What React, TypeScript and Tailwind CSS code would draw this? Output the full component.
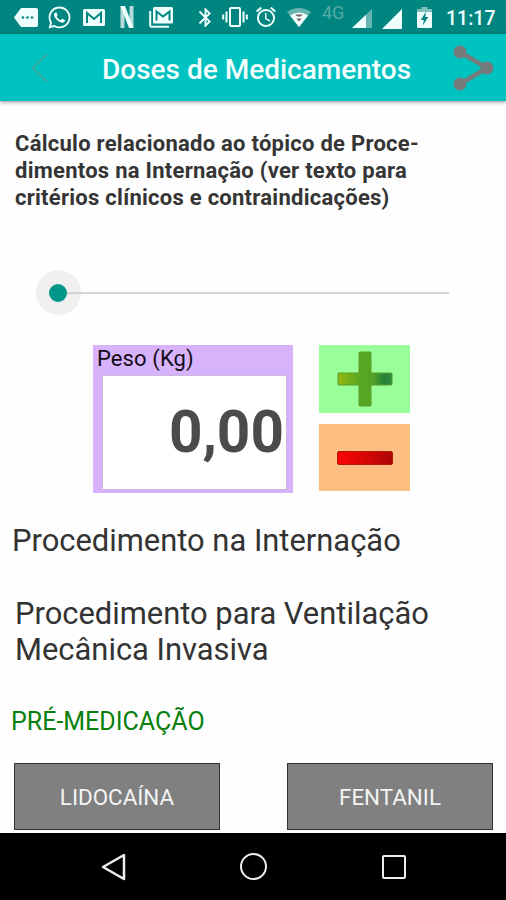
import { FaWhatsapp } from 'react-icons/fa'
import { MdBluetooth, MdAlarm } from 'react-icons/md'

const doses = ['LIDOCAÍNA', 'FENTANIL']

function StatusBar() {
    return (
        <div className="flex h-[34px] items-center bg-[#008580] text-[#effffe]">
            {/* Notifications */}
            <svg className="ml-[14px] w-6 h-[19px] shrink-0" viewBox="0 0 24 19" fill="currentColor">
                <path d="M7 0h15a2 2 0 0 1 2 2v15a2 2 0 0 1-2 2H7L0 9.500z" />
                <g fill="#008580">
                    <circle cx="9" cy="9.500" r="1.300" />
                    <circle cx="13.500" cy="9.500" r="1.300" />
                    <circle cx="18" cy="9.500" r="1.300" />
                </g>
            </svg>
            <FaWhatsapp className="ml-[9px] w-[25px] h-[25px] shrink-0" />
            <svg className="ml-[11px] w-[22px] h-[17px] shrink-0" viewBox="0 0 22 17">
                <rect width="22" height="17" rx="1.500" fill="currentColor" />
                <path d="M4 14V4l7 6 7-6v10" fill="none" stroke="#008580" strokeWidth="2" />
            </svg>
            <svg className="ml-[15px] w-[14px] h-[22px] shrink-0" viewBox="0 0 14 22">
                <path d="M2.500 22V0M11.500 22V0" stroke="#b5dcda" strokeWidth="4" />
                <path d="M0.500 0h4.500l8.500 22H9z" fill="currentColor" />
            </svg>
            <svg className="ml-[15px] w-6 h-[21px] shrink-0" viewBox="0 0 24 21">
                <path d="M1.200 4v14.500q0 1.300 1.300 1.300H20" fill="none" stroke="currentColor" strokeWidth="2" />
                <rect x="4" width="20" height="16.500" rx="1.500" fill="currentColor" />
                <path d="M7.500 13.500V4.500l6.500 5 6.500-5v9" fill="none" stroke="#008580" strokeWidth="2" />
            </svg>

            {/* System */}
            <MdBluetooth className="ml-[21px] w-[23px] h-[23px] shrink-0" />
            <svg className="ml-[5px] w-[26px] h-[20px] shrink-0" viewBox="0 0 26 20" fill="none" stroke="currentColor" strokeWidth="2">
                <rect x="8" y="1" width="10" height="18" rx="1" />
                <path d="M4.500 4.500v11M21.500 4.500v11M1.200 7.500v5M24.800 7.500v5" />
            </svg>
            <MdAlarm className="ml-[6px] w-[24px] h-[24px] shrink-0" />
            <svg className="ml-[9px] w-6 h-[19px] shrink-0" viewBox="0 0 24 19">
                <path d="M0 4Q12-4 24 4L12 19z" fill="#65b4b0" />
                <path d="M3 7.500Q12 1.500 21 7.500L12 19z" fill="currentColor" />
                <path d="M8 6.500h8l-2.300 2h-3.400zM9.500 10.500h5L12 13.500z" fill="#785f68" />
            </svg>
            <span className="ml-[11px] w-[24px] h-[28px] text-[18px] leading-[20px] text-[#55aaa6]">4G</span>
            <svg className="ml-[6px] mt-[3px] w-5 h-[19px] shrink-0" viewBox="0 0 20 19">
                <path d="M20 0v19H0z" fill="#65b4b0" />
                <path d="M14 5.700V19H0z" fill="currentColor" />
            </svg>
            <svg className="ml-[10px] mt-[3px] w-5 h-[20px] shrink-0" viewBox="0 0 20 20">
                <path d="M20 0v20H0z" fill="currentColor" />
            </svg>
            <svg className="ml-[15px] mt-px w-[15px] h-[21px] shrink-0" viewBox="0 0 15 21">
                <path d="M4.500 0h6v2H15v5H0V2h4.500z" fill="#80c0bd" />
                <path d="M0 5h15v14.500a1.500 1.500 0 0 1-1.500 1.500h-12A1.500 1.500 0 0 1 0 19.500z" fill="currentColor" />
                <path d="M9 4.500 3.800 13h3l-1 5.500L11.200 10h-3z" fill="#008580" />
            </svg>
            <span className="ml-[14px] mt-[4px] font-medium text-[19.500px] leading-[24px]">11:17</span>
        </div>
    )
}

function TopBar() {
    return (
        <header className="relative flex h-[67px] items-center bg-[#00c2c1] shadow-[0_1px_4px_rgba(0,0,0,0.450)]">
            <svg className="ml-[31px] w-[17px] h-[30px] shrink-0" viewBox="0 0 17 30" fill="none" stroke="#3daaa7" strokeWidth="1.800">
                <path d="M16 1 1.500 15 16 29" />
            </svg>
            <h1 className="mt-[4px] ml-[54px] w-[351px] whitespace-nowrap text-[28px] font-medium text-[#f2fffe]">Doses de Medicamentos</h1>
            <svg className="mt-px w-[41px] h-[46px] shrink-0" viewBox="0 0 41 46" fill="#777a7b">
                <path d="M7 7 34 23 7 39" fill="none" stroke="#777a7b" strokeWidth="4.500" />
                <circle cx="7" cy="7" r="6.500" />
                <circle cx="34" cy="23" r="6.500" />
                <circle cx="7" cy="39" r="6.500" />
            </svg>
        </header>
    )
}

function WeightSlider() {
    return (
        <div className="mt-[59px] ml-9 flex h-[45px] w-[413px] items-center">
            <div className="flex size-[45px] items-center justify-center rounded-full bg-[#f0f0f0] pr-px">
                <div className="size-[18px] rounded-full bg-[#009788]" />
            </div>
            <div className="-ml-[14px] h-[2px] flex-1 bg-[#d4d4d4]" />
        </div>
    )
}

function WeightInput() {
    return (
        <div className="mt-[30px] ml-[93px] flex gap-[26px]">
            <div className="h-[148px] w-[200px] bg-[#d6b3fb] pt-px">
                <div className="ml-[4px] h-[29px] text-[22px] leading-[26px] tracking-[0.1px] text-[#120c18]">Peso (Kg)</div>
                <div className="ml-[9px] flex h-[115px] w-[185px] items-center justify-end border border-[#c9b9d6] bg-white pr-[2px] text-[58.500px] font-bold text-[#4b4b4b]">
                    0,00
                </div>
            </div>
            <div className="flex flex-col gap-[11px]">
                <button className="flex h-[68px] w-[91px] items-center justify-center bg-[#99ff98]">
                    <svg width="56" height="56" viewBox="0 0 56 56">
                        <defs>
                            <linearGradient id="plus">
                                <stop offset="0" stopColor="#94b910" />
                                <stop offset="0.400" stopColor="#5aa722" />
                                <stop offset="0.650" stopColor="#55a326" />
                                <stop offset="0.850" stopColor="#26813a" />
                                <stop offset="1" stopColor="#2f8d3f" />
                            </linearGradient>
                        </defs>
                        <path
                            d="M23 1h10q1 0 1 1v20h20q1 0 1 1v10q0 1-1 1H34v20q0 1-1 1H23q-1 0-1-1V34H2q-1 0-1-1V23q0-1 1-1h20V2q0-1 1-1z"
                            fill="url(#plus)"
                            stroke="#5b9c28"
                            strokeWidth="1"
                        />
                    </svg>
                </button>
                <button className="flex h-[67px] w-[91px] items-center justify-center bg-[#fdbf81]">
                    <div className="h-[14px] w-[56px] rounded-[2px] border border-[#b51408] bg-linear-to-r from-[#fb0505] via-[#d90505] to-[#ad0606]" />
                </button>
            </div>
        </div>
    )
}

function NavBar() {
    return (
        <nav className="h-[67px] bg-black">
            <div className="flex h-full items-center">
                <svg className="ml-[101px] w-[25px] h-[28px]" viewBox="0 0 25 28" fill="none" stroke="#eee" strokeWidth="2.500" strokeLinejoin="round">
                    <path d="M23 2v24L2 14z" />
                </svg>
                <div className="ml-[114px] size-[27px] rounded-full border-[2.500px] border-[#eee]" />
                <div className="ml-[115px] size-[24px] rounded-[2px] border-[2.500px] border-[#eee]" />
            </div>
        </nav>
    )
}

export default function App() {
    return (
        <div className="flex h-[900px] w-[506px] flex-col overflow-hidden bg-[#fefefe] font-['Roboto',sans-serif]">
            <StatusBar />
            <TopBar />
            <main className="h-[732px]">
                <p className="mt-[29px] ml-[15px] whitespace-nowrap text-[22px] leading-[27px] tracking-[0.26px] font-bold text-[#353535]">
                    Cálculo relacionado ao tópico de Proce-
                    <br />
                    dimentos na Internação (ver texto para
                    <br />
                    critérios clínicos e contraindicações)
                </p>
                <WeightSlider />
                <WeightInput />
                <h2 className="mt-[29px] ml-[12px] whitespace-nowrap text-[30.900px] leading-[37px] text-[#333]">Procedimento na Internação</h2>
                <p className="mt-[37px] ml-[15px] whitespace-nowrap text-[30.900px] leading-[36px] text-[#333]">
                    Procedimento para Ventilação
                    <br />
                    Mecânica Invasiva
                </p>
                <h3 className="mt-[39px] ml-[11px] text-[25px] leading-[30px] text-[#08800b]">PRÉ-MEDICAÇÃO</h3>
                <div className="mt-[26px] ml-[14px] flex gap-[67px]">
                    {doses.map((dose) => (
                        <button key={dose} className="h-[67px] w-[206px] border border-[#333] bg-[#808080] pt-[2px] text-[22.400px] text-[#f3f3f3]">
                            {dose}
                        </button>
                    ))}
                </div>
            </main>
            <NavBar />
        </div>
    )
}
